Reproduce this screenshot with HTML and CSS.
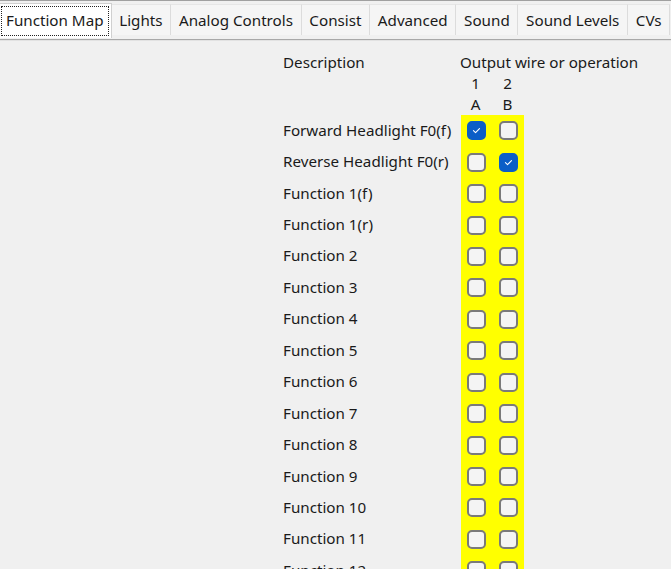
FILE: index.html
```html
<!DOCTYPE html>
<html>
<head>
<meta charset="utf-8">
<link rel="stylesheet" href="styles.css">
</head>
<body>
<div class="topline"></div>
<div class="tabs">
  <div class="tab active"><span class="focus">Function Map</span></div>
  <div class="tab">Lights</div>
  <div class="tab">Analog Controls</div>
  <div class="tab">Consist</div>
  <div class="tab">Advanced</div>
  <div class="tab">Sound</div>
  <div class="tab">Sound Levels</div>
  <div class="tab last">CVs</div>
</div>
<div class="panel">
  <div class="hrow h1"><span class="label">Description</span><span class="outhdr">Output wire or operation</span></div>
  <div class="hrow h2"><span class="label"></span><span class="nums"><span>1</span><span>2</span></span></div>
  <div class="hrow h3"><span class="label"></span><span class="nums"><span>A</span><span>B</span></span></div>
  <div id="rows"></div>
</div>
<script>
var names=["Forward Headlight F0(f)","Reverse Headlight F0(r)","Function 1(f)","Function 1(r)","Function 2","Function 3","Function 4","Function 5","Function 6","Function 7","Function 8","Function 9","Function 10","Function 11","Function 12"];
var checked={"0-0":1,"1-1":1};
var tick='<svg viewBox="0 0 19 19" width="19" height="19"><path d="M5.6 9.6 L8.3 12.1 L13.3 7" fill="none" stroke="#fff" stroke-width="1.4" stroke-linecap="round" stroke-linejoin="round"/></svg>';
var h="";
names.forEach(function(n,i){
  h+='<div class="row"><span class="label">'+n+'</span><span class="cells">';
  for(var c=0;c<2;c++){
    var on=checked[i+"-"+c];
    h+='<span class="cb'+(on?' on':'')+'">'+(on?tick:'')+'</span>';
  }
  h+='</span></div>';
});
document.getElementById("rows").innerHTML=h;
</script>
</body>
</html>
```
FILE: styles.css
```css
html,body{margin:0;padding:0;}
body{
  background:#f0f0f0;
  font-family:"Noto Sans","Open Sans",sans-serif;
  font-size:15.2px;
  color:#1a1a1a;
  width:671px;height:569px;overflow:hidden;
}
.topline{height:1px;background:#a0a0a0;}
.tabs{
  display:flex;
  height:38px;
  align-items:flex-end;
  border-bottom:1px solid #a8a8a8;
  box-shadow:0 1px 0 #e2e2e2;
  white-space:nowrap;
}
.tab{
  box-sizing:border-box;
  height:31px;
  margin-bottom:4px;
  padding:0 7.7px;
  display:flex;align-items:center;
  background:#f5f5f5;
  border-right:1px solid #dcdcdc;
  border-top:1px solid #e6e6e6;
}
.tab.active{
  background:#fff;
  height:35px;
  margin-bottom:1px;
  padding:0 2px 0 1px;
  border:1px solid #d0d0d0;
  border-bottom:none;
  border-left:none;
}
.focus{
  border:1px dotted #222;
  padding:4px 4px 5px 4px;
  line-height:19px;
}
.panel{padding-top:11px;}
.hrow{display:flex;}
.h1{height:22px;line-height:22px;}
.h2,.h3{height:21px;line-height:21px;}
.label{width:177px;margin-left:283px;flex:none;}
.outhdr{white-space:nowrap;}
.nums{display:flex;width:63px;padding-left:6px;gap:13px;box-sizing:border-box;}
.nums span{width:19px;text-align:center;}
.row{display:flex;height:31.45px;align-items:center;}
.row .label{width:178px;position:relative;top:-1px;}
.cells{
  display:flex;gap:13px;
  background:#ffff00;
  width:63px;box-sizing:border-box;
  padding-left:6px;
  height:100%;align-items:center;
}
.cb{
  box-sizing:border-box;
  width:19px;height:19px;
  border:2px solid #7a7a7a;
  border-radius:5px;
  background:#f4f4f4;
  display:flex;align-items:center;justify-content:center;
}
.cb.on{background:#0b5ec7;border-color:#0b5ec7;}
.cb svg{display:block;}
```
